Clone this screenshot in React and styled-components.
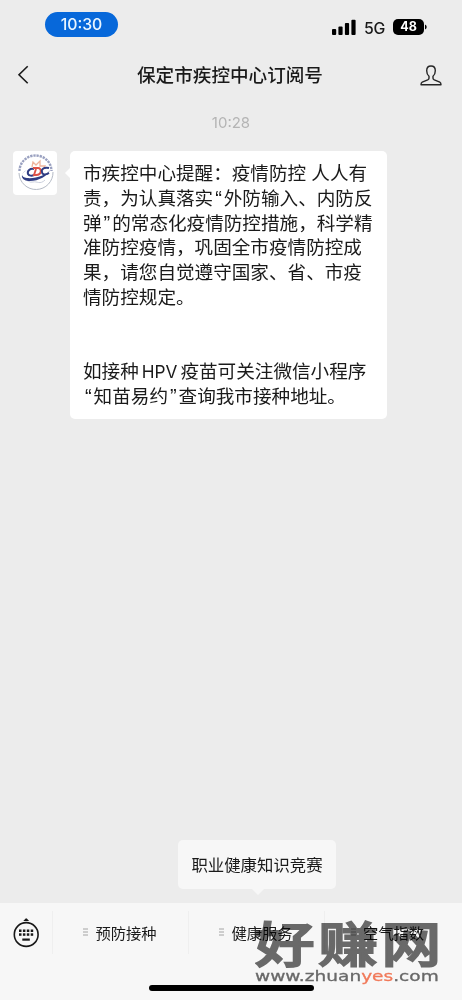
import styled, { createGlobalStyle } from 'styled-components';

const GlobalStyle = createGlobalStyle`
  * {
    box-sizing: border-box;
  }

  body {
    margin: 0;
    background: #ececec;
    font-family: Inter, "Noto Sans CJK SC", sans-serif;
  }
`;

const Screen = styled.div`
  position: relative;
  display: flex;
  flex-direction: column;
  width: 462px;
  height: 1000px;
  overflow: hidden;
  background: #ececec;
  color: #1a1a1a;
`;

const StatusBar = styled.header`
  display: flex;
  align-items: flex-start;
  justify-content: space-between;
  height: 50px;
  padding: 12px 35px 0 45px;
`;

const TimePill = styled.div`
  width: 73px;
  height: 25px;
  border-radius: 13px;
  background: #0768da;
  color: #e9f5ff;
  font-size: 15.8px;
  font-weight: 500;
  line-height: 25px;
  text-align: center;
`;

const StatusIcons = styled.div`
  display: flex;
  align-items: center;
  height: 16px;
  margin-top: 7px;
`;

const Network = styled.span`
  width: 21px;
  margin: 3px 8px 0 8px;
  font-size: 15.8px;
  font-weight: 500;
  line-height: 16px;
  letter-spacing: -0.3px;
`;

const Battery = styled.div`
  width: 31px;
  height: 16px;
  border-radius: 5px;
  background: #000;
  color: #fff;
  font-size: 12.5px;
  font-weight: 700;
  line-height: 16px;
  text-align: center;
`;

const NavBar = styled.nav`
  display: flex;
  align-items: center;
  justify-content: space-between;
  height: 50px;
  padding: 0 20px 0 17px;
`;

const Title = styled.h1`
  margin: 0 0 0 11px;
  font-size: 18.6px;
  font-weight: 500;
  line-height: 28px;
`;

const Chat = styled.main`
  flex: 1;
  display: flex;
  flex-direction: column;
`;

const Timestamp = styled.time`
  height: 51px;
  padding-top: 13px;
  color: #b4b4b4;
  font-size: 15px;
  line-height: 20px;
  text-align: center;
`;

const MessageRow = styled.div`
  display: flex;
  align-items: flex-start;
  padding-left: 13px;
`;

const Avatar = styled.div`
  width: 44px;
  height: 44px;
  margin-right: 13px;
  border-radius: 4px;
  background: #fff;
`;

const Bubble = styled.div`
  position: relative;
  width: 317px;
  height: 268px;
  padding: 10px 0 0 13px;
  border-radius: 5px;
  background: #fff;

  &::before {
    content: '';
    position: absolute;
    left: -5px;
    top: 17px;
    border: solid transparent;
    border-width: 5px 5px 5px 0;
    border-right-color: #fff;
  }
`;

const Line = styled.p`
  height: 24.75px;
  margin: 0;
  font-size: 18.6px;
  font-weight: 400;
  line-height: 24.75px;
  white-space: pre;
`;

const Quote = styled.span`
  display: inline-block;
  width: 10.6px;
  font-family: "Liberation Sans", sans-serif;
  font-size: 20px;
  line-height: 20px;
  text-align: center;
`;

const Latin = styled.span`
  margin: 0 3px;
  font-family: Inter, sans-serif;
  font-size: 17.2px;
`;

const SubMenu = styled.div`
  position: relative;
  width: 158px;
  height: 49px;
  margin: auto 0 14px 178px;
  border-radius: 5px;
  background: #f7f7f7;
  font-size: 16.4px;
  line-height: 51px;
  text-align: center;

  &::after {
    content: '';
    position: absolute;
    left: 74px;
    bottom: -6px;
    border: solid transparent;
    border-width: 6px 6px 0;
    border-top-color: #f7f7f7;
  }
`;

const Footer = styled.footer`
  display: flex;
  flex-direction: column;
  align-items: center;
  justify-content: space-between;
  height: 97px;
  padding-bottom: 9px;
  background: #f7f7f7;
`;

const MenuBar = styled.div`
  display: flex;
  width: 100%;
  height: 60px;
  padding-top: 8px;
`;

const KeyboardButton = styled.div`
  width: 52px;
  padding: 7px 0 0 13px;
`;

const MenuItem = styled.div`
  display: flex;
  align-items: center;
  justify-content: center;
  gap: 7px;
  width: 136px;
  height: 43px;
  padding: 0 1px 1px 0;
  border-left: 1px solid #efefef;
  font-size: 15.3px;

  &:last-child {
    padding-right: 10px;
  }
`;

const HomeIndicator = styled.div`
  width: 165px;
  height: 6px;
  border-radius: 3px;
  background: #000;
`;

const Watermark = styled.div`
  position: absolute;
  left: 255px;
  top: 918px;
  width: 186px;
  color: #6c6c6c;
  mix-blend-mode: multiply;
`;

const WatermarkName = styled.div`
  height: 49px;
  font-size: 48px;
  font-weight: 500;
  line-height: 53px;
  letter-spacing: 3px;
  white-space: nowrap;
  transform: scaleX(1.24);
  transform-origin: left;
  -webkit-text-stroke: 1.9px #6c6c6c;
`;

const WatermarkUrl = styled.div`
  font-family: "DejaVu Sans", sans-serif;
  font-size: 14.5px;
  line-height: 18px;
  white-space: nowrap;
  transform: scaleX(1.28);
  transform-origin: left;
  -webkit-text-stroke: 0.3px currentColor;

  span {
    color: #f97d5c;
  }
`;

const lines = [
  '市疾控中心提醒：疫情防控 人人有',
  '责，为认真落实“外防输入、内防反',
  '弹”的常态化疫情防控措施，科学精',
  '准防控疫情，巩固全市疫情防控成',
  '果，请您自觉遵守国家、省、市疫',
  '情防控规定。',
  '',
  '',
  '如接种HPV疫苗可关注微信小程序',
  '“知苗易约”查询我市接种地址。',
];

const menus = ['预防接种', '健康服务', '空气指数'];

// Quotes and latin words get their own spacing inside a chinese line
const renderLine = (line) =>
  line.split(/([“”]|HPV)/).map((part, i) => {
    if (part === '“' || part === '”') return <Quote key={i}>{part}</Quote>;
    if (part === 'HPV') return <Latin key={i}>{part}</Latin>;
    return part;
  });

const SignalIcon = () => (
  <svg width="24" height="16" viewBox="0 0 24 16">
    <rect x="0" y="10" width="4.2" height="6" rx="1" />
    <rect x="6.4" y="7.5" width="4.2" height="8.5" rx="1" />
    <rect x="12.9" y="4" width="4.2" height="12" rx="1" />
    <rect x="19.4" y="0.8" width="4.2" height="15.2" rx="1" />
  </svg>
);

const BatteryTip = () => (
  <svg width="3" height="6" viewBox="0 0 3 6">
    <path d="M1 0.5Q2.7 1.3 2.7 3T1 5.5Z" />
  </svg>
);

const BackIcon = () => (
  <svg width="12" height="20" viewBox="0 0 12 20" fill="none" stroke="#1a1a1a" strokeWidth="1.6">
    <path d="M10.7 1.2 2 9.7l8.7 8.6" />
  </svg>
);

const PersonIcon = () => (
  <svg width="22" height="21" viewBox="0 0 22 21" fill="none" stroke="#262626" strokeWidth="1.4" strokeLinejoin="round">
    <path d="M11 1C8.2 1 6.7 3 6.7 5.7c0 2.3.8 4.3 2.3 5.5v2c0 .8-.5 1.2-1.3 1.6L2.2 17.2c-.9.4-1.2.9-1.2 2.6h20c0-1.7-.3-2.2-1.2-2.6L14.3 14.8C13.5 14.4 13 14 13 13.2v-2c1.5-1.2 2.3-3.2 2.3-5.5C15.3 3 13.8 1 11 1Z" />
  </svg>
);

const CdcLogo = () => (
  <svg width="44" height="44" viewBox="0 0 44 44" fill="none">
    <path d="M6.5 20a16 15.5 0 0 1 32 0" stroke="#9aa1c0" strokeWidth="2.4" strokeDasharray="2.3 0.9" />
    <path d="M6 22a17 17 0 0 0 34-1" stroke="#b4bac5" strokeWidth="1" />
    <path d="m19 16 1-5 3 3 4-4 0 5 5 0-2 4" stroke="#efb49c" strokeWidth="1.3" />
    <path d="M12 29c3 0 4 3 8 2s7 3 12-2" stroke="#cbd0dd" strokeWidth="1" />
    <path d="M14 19c-6 3-7 7 0 8 8 1 20-3 23-8-2 6-13 12-22 11-8-1-8-8-1-11Z" fill="#303d83" />
    <path d="M21 18c-4-1-7 2-6 5 1 2 4 2 6 1" stroke="#303d83" strokeWidth="2" />
    <path d="M20 17h5c4 0 4 7-2 7h-2l2-6" stroke="#dd5146" strokeWidth="1.9" />
    <path d="M36 17c-5-1-8 1-7 4 0 3 4 3 7 1" stroke="#303d83" strokeWidth="1.9" />
  </svg>
);

const KeyboardIcon = () => (
  <svg width="27" height="30" viewBox="0 0 27 30">
    <path d="M10.3 2.9 12.4.7Q13.2 0 14 .7l2.1 2.2Z" fill="#171717" />
    <circle cx="13.2" cy="16.5" r="11.9" fill="none" stroke="#171717" strokeWidth="1.6" />
    {[6, 9.9, 13.8, 17.7].map((x) => (
      <g key={x} fill="#171717">
        <rect x={x} y="11.5" width="2.5" height="2.5" />
        <rect x={x} y="15.3" width="2.5" height="2.5" />
      </g>
    ))}
    <rect x="9.3" y="20.5" width="7.5" height="2.2" fill="#171717" />
  </svg>
);

const MenuLines = () => (
  <svg width="5" height="8" viewBox="0 0 5 8" stroke="#9a9a9a" strokeWidth="0.9">
    <path d="M0 1h5M0 4h5M0 7h5" />
  </svg>
);

const App = () => {
  return (
    <>
      <GlobalStyle />
      <Screen>
        <StatusBar>
          <TimePill>10:30</TimePill>
          <StatusIcons>
            <SignalIcon />
            <Network>5G</Network>
            <Battery>48</Battery>
            <BatteryTip />
          </StatusIcons>
        </StatusBar>

        <NavBar>
          <BackIcon />
          <Title>保定市疾控中心订阅号</Title>
          <PersonIcon />
        </NavBar>

        <Chat>
          <Timestamp>10:28</Timestamp>
          <MessageRow>
            <Avatar>
              <CdcLogo />
            </Avatar>
            <Bubble>
              {lines.map((line, i) => (
                <Line key={i}>{renderLine(line)}</Line>
              ))}
            </Bubble>
          </MessageRow>
          <SubMenu>职业健康知识竞赛</SubMenu>
        </Chat>

        <Footer>
          <MenuBar>
            <KeyboardButton>
              <KeyboardIcon />
            </KeyboardButton>
            {menus.map((menu) => (
              <MenuItem key={menu}>
                <MenuLines />
                {menu}
              </MenuItem>
            ))}
          </MenuBar>
          <HomeIndicator />
        </Footer>

        <Watermark>
          <WatermarkName>好赚网</WatermarkName>
          <WatermarkUrl>
            www.zhuan<span>yes</span>.com
          </WatermarkUrl>
        </Watermark>
      </Screen>
    </>
  );
};

export default App;
